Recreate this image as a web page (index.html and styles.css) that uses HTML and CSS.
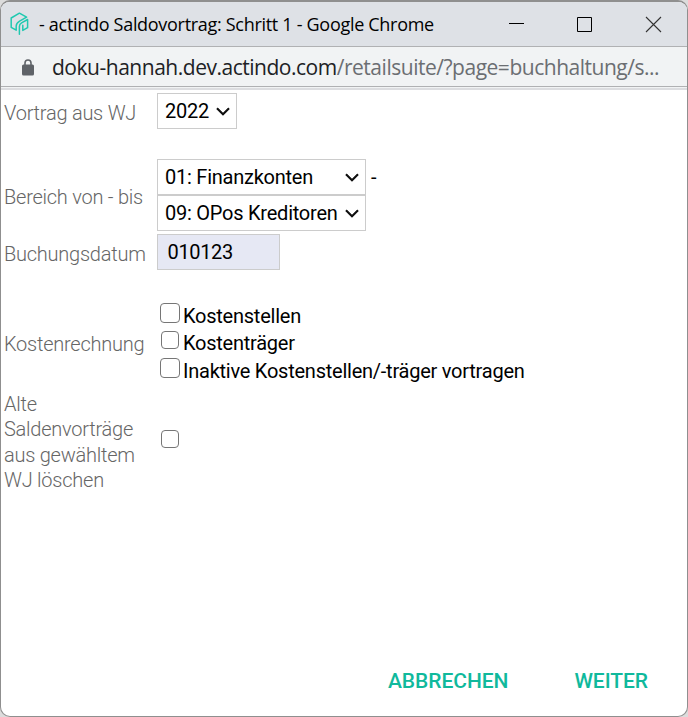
FILE: index.html
```html
<!DOCTYPE html>
<html lang="de">
<head>
<meta charset="utf-8">
<title>- actindo Saldovortrag: Schritt 1</title>
<link rel="stylesheet" href="styles.css">
</head>
<body>
<div class="window">
  <header class="titlebar">
    <svg class="logo" width="20" height="25" viewBox="0 0 20 25" fill="none" stroke="#20c9b0" stroke-width="1.5" stroke-linejoin="round" stroke-linecap="round"><path d="M6.200 19.200 1.200 16.300V7L9.400 2.200l7.200 4-7 3.900c-2.500 1.400-3.400 2.300-3.400 4.900Z"/><path d="M9.400 23.200v-7.700c0-2 .6-2.800 2.200-3.700l6-3.300v8.200l-4.800 2.700v-5.200"/></svg>
    <span class="title">- actindo Saldovortrag: Schritt 1 - Google Chrome</span>
    <svg class="controls" width="155" height="18" viewBox="0 0 155 18" fill="none" stroke="#000"><path d="M0 8.500h15M68.500 2.500h14v14h-14z"/><path stroke="#333" stroke-width="1.100" d="m137 2 15 15M152 2l-15 15"/></svg>
  </header>
  <div class="addressbar">
    <svg class="lock" width="12" height="17" viewBox="0 0 12 17"><path d="M3 7V4a3 3 0 0 1 6 0v3" fill="none" stroke="#5f6368" stroke-width="1.600"/><rect y="5.500" width="12" height="11" rx="1.500" fill="#5f6368"/></svg>
    <span class="url"><span class="host">doku-hannah.dev.actindo.com</span><span class="path">/retailsuite/?page=buchhaltung/s...</span></span>
  </div>
  <div class="divider"></div>
  <main class="form">
    <div class="row year">
      <span class="label l-year">Vortrag aus WJ</span>
      <div class="box select w-year"><span>2022</span><svg class="chevron" width="14" height="9" viewBox="0 0 14 9"><path d="m1 1.300 6 6 6-6"/></svg></div>
    </div>
    <div class="row range">
      <span class="label l-range">Bereich von - bis</span>
      <div>
        <div class="line"><div class="box select w-range"><span>01: Finanzkonten</span><svg class="chevron" width="14" height="9" viewBox="0 0 14 9"><path d="m1 1.300 6 6 6-6"/></svg></div><span class="dash">-</span></div>
        <div class="box select w-range"><span>09: OPos Kreditoren</span><svg class="chevron" width="14" height="9" viewBox="0 0 14 9"><path d="m1 1.300 6 6 6-6"/></svg></div>
      </div>
    </div>
    <div class="row date">
      <span class="label l-date">Buchungsdatum</span>
      <div class="box input"><span>010123</span></div>
    </div>
    <div class="row costs">
      <span class="label l-costs">Kostenrechnung</span>
      <div class="options">
        <div class="option"><i class="check"></i><span>Kostenstellen</span></div>
        <div class="option"><i class="check small"></i><span>Kostenträger</span></div>
        <div class="option"><i class="check"></i><span>Inaktive Kostenstellen/-träger vortragen</span></div>
      </div>
    </div>
    <div class="row old">
      <span class="label l-old">Alte<br>Saldenvorträge<br>aus gewähltem<br>WJ löschen</span>
      <i class="check small"></i>
    </div>
  </main>
  <footer class="actions"><span>ABBRECHEN</span><span>WEITER</span></footer>
</div>
</body>
</html>
```
FILE: styles.css
```css
* { box-sizing: border-box; }
body { margin: 0; background: #dcdcdc; }
.window {
  width: 688px; height: 717px; display: flex; flex-direction: column;
  border: 1px solid #8f8f8f; border-top-width: 2px; border-radius: 10px;
  background: #fff; overflow: hidden;
  font: 20px/24px Roboto, sans-serif; letter-spacing: -0.24px; color: #000; white-space: nowrap;
}
.titlebar {
  height: 45px; flex: none; display: flex; align-items: center;
  background: #dee1e6; border-bottom: 1px solid #b0b1b3; padding: 0 23px 0 9px;
}
.logo { margin-top: -1px; }
.title { margin-left: 9px; font: 18px/24px "Open Sans", sans-serif; letter-spacing: -0.3px; }
.controls { margin-left: auto; }
.addressbar {
  height: 40px; flex: none; display: flex; align-items: center;
  background: #f1f3f4; border-bottom: 1px solid #b0b1b3; padding: 1px 0 0 21px;
}
.url { margin-left: 18px; font: 21px/28px "Open Sans", sans-serif; letter-spacing: -0.48px; }
.host { color: #202124; }
.path { color: #6b6e72; }
.divider { height: 3px; flex: none; border-top: 1px solid #f1f3f4; background: #dcdde0; }
.form { flex: 1; padding: 2px 0 0 3px; }
.row { display: grid; grid-template-columns: 153px 1fr; align-items: center; }
.label { color: #666; font-weight: 300; }
.box { height: 36px; border: 1px solid #ccc; display: flex; align-items: center; padding: 0 7px; }
.select { justify-content: space-between; }
.chevron { fill: none; stroke: #111; stroke-width: 2.200; }
.w-year { width: 80px; padding-right: 6px; }
.w-range { width: 209px; padding-right: 6px; }
.year { height: 36px; margin-top: 1px; }
.l-year { padding-top: 3px; }
.range { margin-top: 30px; }
.l-range { padding-top: 4px; }
.line { display: flex; align-items: center; }
.dash { margin-left: 5px; }
.date { margin-top: 3px; }
.l-date { padding-top: 4px; }
.input { width: 123px; background: #e6e8f4; padding-left: 9.500px; letter-spacing: -0.35px; }
.costs { margin-top: 28px; height: 84px; }
.l-costs { padding-top: 7px; }
.option { height: 27.500px; display: flex; align-items: center; }
.option span { padding-top: 6px; }
.check { width: 20px; height: 20px; flex: none; margin: 0 3px; border: 1.500px solid #767676; border-radius: 4px; background: #fff; }
.small { width: 18px; height: 18px; margin: 0 4px; }
.old { margin-top: 10px; }
.l-old { line-height: 25.400px; }
.old .check { margin-top: -7px; }
.actions { height: 72px; flex: none; display: flex; padding: 25px 39px 0 0; justify-content: flex-end; gap: 66px; font-size: 21px; font-weight: 500; letter-spacing: -0.05px; color: #10b99c; }
```
